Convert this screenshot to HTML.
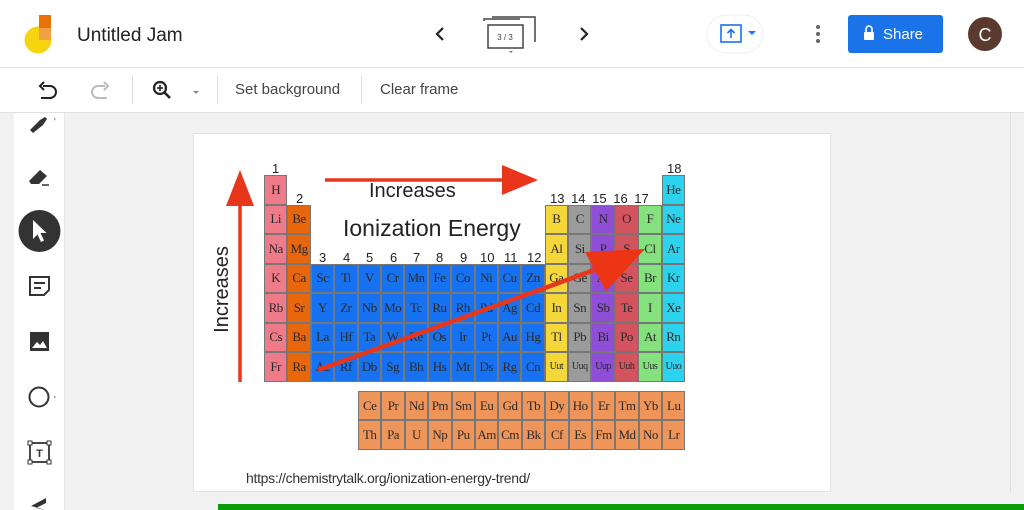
<!DOCTYPE html>
<html><head><meta charset="utf-8"><style>
*{margin:0;padding:0;box-sizing:border-box}
body{width:1024px;height:510px;overflow:hidden;background:#f1f1f1;font-family:"Liberation Sans",sans-serif;position:relative}
.abs{position:absolute}
#hdr{left:0;top:0;width:1024px;height:68px;background:#fff;border-bottom:1px solid #e4e4e4}
#tb{left:0;top:68px;width:1024px;height:45px;background:#fff;border-bottom:1px solid #e0e0e0}
.tbt{font-size:15px;color:#444;top:81px}
.sep{width:1px;height:28px;background:#e0e0e0;top:76px}
#side{left:14px;top:113px;width:51px;height:397px;background:#fff;border-right:1px solid #e6e6e6}
#frame{left:193px;top:133px;width:638px;height:359px;background:#fff;border:1px solid #e2e2e2}
.g{position:absolute;left:264px;top:175px;display:grid;grid-template-columns:repeat(18,23.4px);grid-auto-rows:29.5px}
.c{border:1px solid #777;font-family:"Liberation Serif",serif;font-size:13px;color:#2a2a2a;display:flex;align-items:center;justify-content:center;letter-spacing:-0.5px}
.p{background:#ef7b8a}.o{background:#e8670c}.b{background:#1672f0}.y{background:#f6d73a}.gr{background:#9b9b9b}.pu{background:#8e4fd6}.r{background:#d3545f}.gn{background:#85e07e}.cy{background:#2bd3ef}.l{background:#f0955a}
.sm{font-size:10px}
.n{position:absolute;font-size:13px;color:#222}
.lg{position:absolute;left:358px;top:391px;display:grid;grid-template-columns:repeat(14,23.4px);grid-auto-rows:29.3px}
</style></head><body>
<div id="hdr" class="abs"></div>
<svg class="abs" style="left:0;top:0" width="1024" height="68">
<circle cx="38" cy="40" r="13.5" fill="#f6d40f"/>
<rect x="39" y="15" width="12" height="14" fill="#e8710a"/>
<rect x="39" y="28" width="12" height="12" fill="#f2a041"/>
<path d="M443 28 L437 34 L443 40" stroke="#222" stroke-width="2.2" fill="none"/>
<path d="M581 28 L587 34 L581 40" stroke="#222" stroke-width="2.2" fill="none"/>
<rect x="488" y="25" width="35" height="23" fill="#fff" stroke="#444" stroke-width="1.5"/>
<path d="M484 21 V19 H520" stroke="#444" stroke-width="1.5" fill="none"/>
<path d="M492 17 H535 V42" stroke="#444" stroke-width="1.5" fill="none"/>
<text x="505" y="40" font-size="8" text-anchor="middle" fill="#444" font-family="Liberation Sans">3 / 3</text>
<path d="M509 51 L513 51 L511 53Z" fill="#777"/>
<rect x="707" y="15" width="56" height="38" rx="19" fill="#fff" stroke="#eee"/>
<rect x="721" y="25" width="20" height="17" fill="none" stroke="#1a73e8" stroke-width="1.6"/>
<path d="M731 38 V30 M727.5 33 L731 29.5 L734.5 33" stroke="#1a73e8" stroke-width="1.6" fill="none"/>
<path d="M748 31 H756 L752 35Z" fill="#1a73e8"/>
<circle cx="818" cy="27" r="2" fill="#666"/><circle cx="818" cy="34" r="2" fill="#666"/><circle cx="818" cy="41" r="2" fill="#666"/>
<rect x="848" y="15" width="95" height="38" rx="3" fill="#1a73e8"/>
<rect x="864" y="32" width="10" height="8" rx="1" fill="#fff"/>
<path d="M866 32 V29 A3 3 0 0 1 872 29 V32" stroke="#fff" stroke-width="1.6" fill="none"/>
<text x="883" y="39" font-size="15" fill="#fff" font-family="Liberation Sans">Share</text>
<circle cx="985" cy="34" r="17" fill="#5a3a2e"/>
<text x="985" y="41" font-size="18" fill="#fff" text-anchor="middle" font-family="Liberation Sans">C</text>
</svg>
<div class="abs" style="left:77px;top:25px;font-size:19px;color:#222">Untitled Jam</div>
<div id="tb" class="abs"></div>
<svg class="abs" style="left:0;top:68px" width="220" height="45">
<path d="M43 18 H50 A6 6 0 0 1 50 30 H41 M44 14 L40 18 L44 22" stroke="#222" stroke-width="2" fill="none"/>
<path d="M105 18 H98 A6 6 0 0 0 98 30 H107 M104 14 L108 18 L104 22" stroke="#bbb" stroke-width="2" fill="none"/>
<circle cx="160" cy="20" r="6" stroke="#222" stroke-width="2.2" fill="none"/>
<path d="M164.5 24.5 L170 30" stroke="#222" stroke-width="2.6"/>
<path d="M157 20 H163 M160 17 V23" stroke="#222" stroke-width="1.6"/>
<path d="M193 23 H199 L196 26Z" fill="#888"/>
</svg>
<div class="abs sep" style="left:132px"></div>
<div class="abs sep" style="left:217px"></div>
<div class="abs sep" style="left:361px"></div>
<div class="abs tbt" style="left:235px">Set background</div>
<div class="abs tbt" style="left:380px">Clear frame</div>
<div id="side" class="abs"></div>
<svg class="abs" style="left:14px;top:113px" width="51" height="397">
<path d="M16 17 L26 7 L31 4 L33 6 L29 12 L19 20Z" fill="#333"/><path d="M40 4 L42 6 L40 8Z" fill="#aaa"/>
<path d="M15 68 L26 57 L33 63 L25 71 L17 71Z" fill="#333"/><path d="M28 72 H35" stroke="#333" stroke-width="1.5"/>
<circle cx="25.5" cy="118" r="21" fill="#333"/>
<path d="M19 107 L19 126 L23.5 121.5 L27 129 L30 127.5 L26.5 120 L32.5 120Z" fill="#fff"/>
<path d="M16 164 H35 V177 L30 182 H16Z" fill="none" stroke="#333" stroke-width="2"/>
<path d="M20 170 H31 M20 175 H27" stroke="#333" stroke-width="2"/>
<rect x="16" y="219" width="19" height="19" fill="#333"/>
<path d="M18 235 L23 229 L26 232 L29 228 L33 235Z" fill="#fff"/>
<circle cx="25" cy="284" r="9.5" stroke="#333" stroke-width="2" fill="none"/><path d="M40 282 L42 284 L40 286Z" fill="#aaa"/>
<rect x="16" y="330" width="19" height="19" fill="none" stroke="#333" stroke-width="1.8"/>
<rect x="14" y="328" width="4" height="4" fill="#fff" stroke="#333"/><rect x="33" y="328" width="4" height="4" fill="#fff" stroke="#333"/>
<rect x="14" y="347" width="4" height="4" fill="#fff" stroke="#333"/><rect x="33" y="347" width="4" height="4" fill="#fff" stroke="#333"/>
<text x="25.5" y="344" font-size="11" font-weight="bold" text-anchor="middle" fill="#333" font-family="Liberation Sans">T</text>
<path d="M17 393 L32 385 L32 390 L22 395 L32 397" fill="#333"/>
</svg>
<div class="abs" style="left:1010px;top:113px;width:1px;height:380px;background:#e0e0e0"></div>
<div class="abs" style="left:218px;top:504px;width:806px;height:6px;background:#0a9b0a"></div>
<div id="frame" class="abs"></div>

<div class="n" style="left:272px;top:161px">1</div>
<div class="n" style="left:296px;top:191px">2</div>
<div class="n" style="left:667px;top:161px">18</div>
<div class="n" style="left:550px;top:191px;word-spacing:3px">13 14 15 16 17</div>
<div class="n" style="left:319px;top:250px">3</div><div class="n" style="left:343px;top:250px">4</div><div class="n" style="left:366px;top:250px">5</div><div class="n" style="left:390px;top:250px">6</div><div class="n" style="left:413px;top:250px">7</div><div class="n" style="left:436px;top:250px">8</div><div class="n" style="left:460px;top:250px">9</div><div class="n" style="left:480px;top:250px">10</div><div class="n" style="left:504px;top:250px">11</div><div class="n" style="left:527px;top:250px">12</div>

<div class="g">
<div class="c p">H</div><div class="c cy" style="grid-column:18">He</div>
<div class="c p">Li</div><div class="c o">Be</div><div class="c y" style="grid-column:13">B</div><div class="c gr">C</div><div class="c pu">N</div><div class="c r">O</div><div class="c gn">F</div><div class="c cy">Ne</div>
<div class="c p">Na</div><div class="c o">Mg</div><div class="c y" style="grid-column:13">Al</div><div class="c gr">Si</div><div class="c pu">P</div><div class="c r">S</div><div class="c gn">Cl</div><div class="c cy">Ar</div>
<div class="c p">K</div><div class="c o">Ca</div><div class="c b">Sc</div><div class="c b">Ti</div><div class="c b">V</div><div class="c b">Cr</div><div class="c b">Mn</div><div class="c b">Fe</div><div class="c b">Co</div><div class="c b">Ni</div><div class="c b">Cu</div><div class="c b">Zn</div><div class="c y">Ga</div><div class="c gr">Ge</div><div class="c pu">As</div><div class="c r">Se</div><div class="c gn">Br</div><div class="c cy">Kr</div>
<div class="c p">Rb</div><div class="c o">Sr</div><div class="c b">Y</div><div class="c b">Zr</div><div class="c b">Nb</div><div class="c b">Mo</div><div class="c b">Tc</div><div class="c b">Ru</div><div class="c b">Rh</div><div class="c b">Pd</div><div class="c b">Ag</div><div class="c b">Cd</div><div class="c y">In</div><div class="c gr">Sn</div><div class="c pu">Sb</div><div class="c r">Te</div><div class="c gn">I</div><div class="c cy">Xe</div>
<div class="c p">Cs</div><div class="c o">Ba</div><div class="c b">La</div><div class="c b">Hf</div><div class="c b">Ta</div><div class="c b">W</div><div class="c b">Re</div><div class="c b">Os</div><div class="c b">Ir</div><div class="c b">Pt</div><div class="c b">Au</div><div class="c b">Hg</div><div class="c y">Tl</div><div class="c gr">Pb</div><div class="c pu">Bi</div><div class="c r">Po</div><div class="c gn">At</div><div class="c cy">Rn</div>
<div class="c p">Fr</div><div class="c o">Ra</div><div class="c b">Ac</div><div class="c b">Rf</div><div class="c b">Db</div><div class="c b">Sg</div><div class="c b">Bh</div><div class="c b">Hs</div><div class="c b">Mt</div><div class="c b">Ds</div><div class="c b">Rg</div><div class="c b">Cn</div><div class="c y sm">Uut</div><div class="c gr sm">Uuq</div><div class="c pu sm">Uup</div><div class="c r sm">Uuh</div><div class="c gn sm">Uus</div><div class="c cy sm">Uuo</div>
</div>
<div class="lg">
<div class="c l">Ce</div><div class="c l">Pr</div><div class="c l">Nd</div><div class="c l">Pm</div><div class="c l">Sm</div><div class="c l">Eu</div><div class="c l">Gd</div><div class="c l">Tb</div><div class="c l">Dy</div><div class="c l">Ho</div><div class="c l">Er</div><div class="c l">Tm</div><div class="c l">Yb</div><div class="c l">Lu</div>
<div class="c l">Th</div><div class="c l">Pa</div><div class="c l">U</div><div class="c l">Np</div><div class="c l">Pu</div><div class="c l">Am</div><div class="c l">Cm</div><div class="c l">Bk</div><div class="c l">Cf</div><div class="c l">Es</div><div class="c l">Fm</div><div class="c l">Md</div><div class="c l">No</div><div class="c l">Lr</div>
</div>

<div class="abs" style="left:369px;top:180px;font-size:20px;color:#222">Increases</div>
<div class="abs" style="left:343px;top:215px;font-size:23px;color:#222">Ionization Energy</div>
<div class="abs" style="left:175px;top:278px;width:95px;font-size:20px;color:#222;transform:rotate(-90deg);text-align:center">Increases</div>
<div class="abs" style="left:246px;top:470px;font-size:14px;color:#333;letter-spacing:-0.3px">https://chemistrytalk.org/ionization-energy-trend/</div>

<svg class="abs" style="left:0;top:0" width="1024" height="510">
<path d="M240 382 V200" stroke="#e8351c" stroke-width="3.5"/>
<path d="M240 170 L226 206 L254 206Z" fill="#e8351c"/>
<path d="M325 180 H505" stroke="#e8351c" stroke-width="3.5"/>
<path d="M538 180 L502 165 L502 195Z" fill="#e8351c"/>
<path d="M318 370 L600 268" stroke="#e8351c" stroke-width="4.5"/>
<path d="M645 249 L585 252 L606 291Z" fill="#ec3514"/>
</svg>
</body></html>
